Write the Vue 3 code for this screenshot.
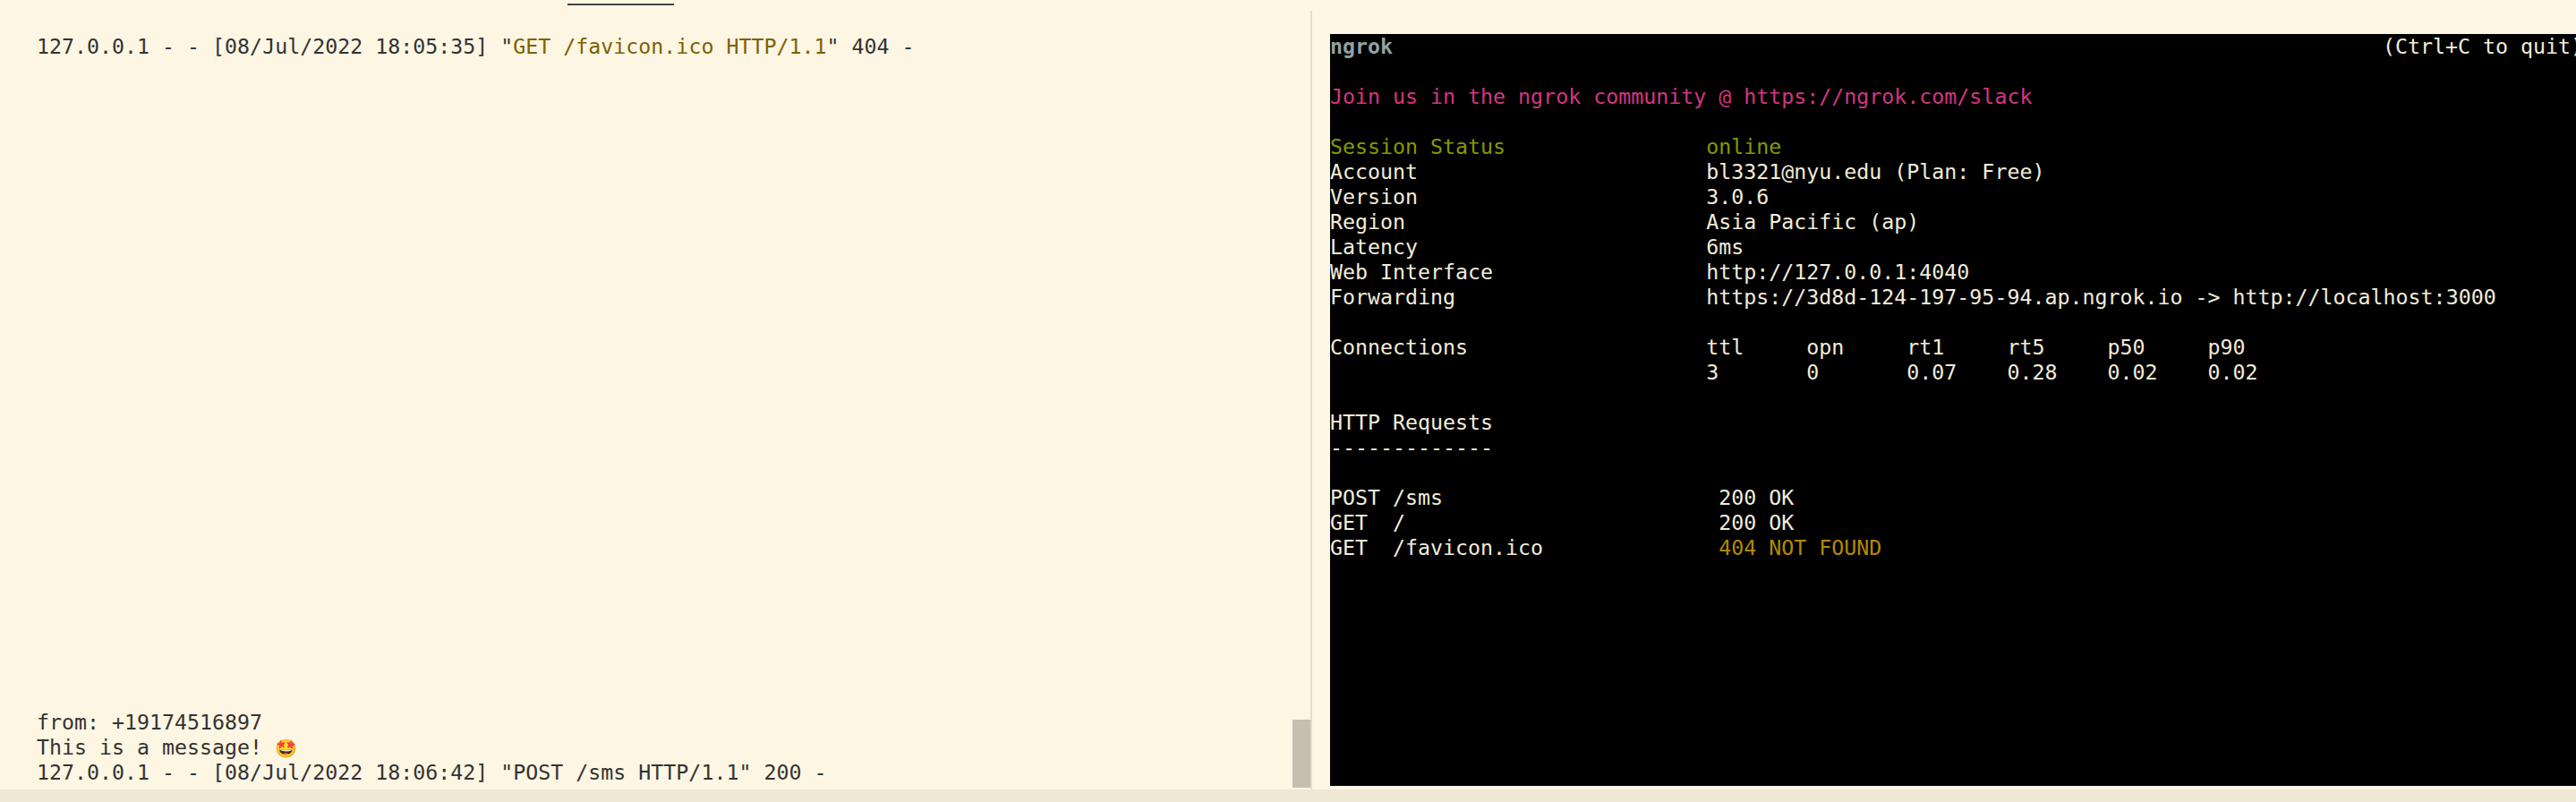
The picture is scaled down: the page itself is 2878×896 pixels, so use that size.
<script setup>
const info = [
  ['Account', 'bl3321@nyu.edu (Plan: Free)'],
  ['Version', '3.0.6'],
  ['Region', 'Asia Pacific (ap)'],
  ['Latency', '6ms'],
  ['Web Interface', 'http://127.0.0.1:4040'],
  ['Forwarding', 'https://3d8d-124-197-95-94.ap.ngrok.io -> http://localhost:3000'],
]
const rows = [
  ...info.map((r) => r[0].padEnd(30) + r[1]),
  '',
  'Connections'.padEnd(30) + 'ttl     opn     rt1     rt5     p50     p90',
  ''.padEnd(30) + '3       0       0.07    0.28    0.02    0.02',
  '',
  'HTTP Requests',
  '-------------',
  '',
  'POST /sms'.padEnd(31) + '200 OK',
  'GET  /'.padEnd(31) + '200 OK',
]
const sessionRow = 'Session Status'.padEnd(30) + 'online'
const lastRow = 'GET  /favicon.ico'.padEnd(31)
</script>

<template>
  <div class="screen">
    <div class="panes">
      <section class="pane left">
        <div class="tab-mark"></div>
        <div class="log top">127.0.0.1 - - [08/Jul/2022 18:05:35] "<span class="gold">GET /favicon.ico HTTP/1.1</span>" 404 -</div>
        <div class="log bottom">
          <div>from: +19174516897</div>
          <div class="msg">This is a message! <span class="emoji">🤩</span></div>
          <div>127.0.0.1 - - [08/Jul/2022 18:06:42] "POST /sms HTTP/1.1" 200 -</div>
        </div>
        <div class="thumb"></div>
      </section>
      <section class="pane right">
        <div class="term">
          <div class="head"><b class="brand">ngrok</b><span class="quit">(Ctrl+C to quit)</span></div>
          <div class="line"></div>
          <div class="line pink">Join us in the ngrok community @ https://ngrok.com/slack</div>
          <div class="line"></div>
          <div class="line lime">{{ sessionRow }}</div>
          <div v-for="(row, i) in rows" :key="i" class="line">{{ row }}</div>
          <div class="line">{{ lastRow }}<span class="amber">404 NOT FOUND</span></div>
        </div>
      </section>
    </div>
    <footer class="status"></footer>
  </div>
</template>

<style>
html, body { margin: 0; background: #fdf6e3; overflow: hidden; }
</style>

<style scoped>
.screen { width: 2878px; height: 896px; display: flex; flex-direction: column; background: #fdf6e3; font-family: "DejaVu Sans Mono", monospace; font-size: 23.27px; line-height: 28px; color: #333; overflow: hidden; }
.panes { flex: 1; display: flex; min-height: 0; }
.pane { position: relative; box-sizing: border-box; }
.left { width: 1466px; border-right: 2px solid #e3decb; margin-top: 12px; height: 870px; flex: none; }
.tab-mark { position: absolute; left: 634px; top: -8px; width: 119px; height: 2px; background: #444; }
.log { position: absolute; left: 41px; white-space: pre; }
.top { top: 26px; }
.bottom { top: 781px; }
.msg { height: 28px; }
.gold { color: #7f6000; }
.emoji { font-family: "Noto Color Emoji", "DejaVu Sans", sans-serif; font-size: 20px; line-height: 1; }
.thumb { position: absolute; right: 0; top: 792px; width: 20px; height: 76px; background: #c4bfb0; }
.right { flex: 1; padding: 38px 0 0 20px; min-width: 0; }
.term { height: 840px; background: #000; color: #f2ecd9; white-space: pre; overflow: hidden; }
.head { display: flex; height: 28px; white-space: pre; }
.brand { color: #93a1a1; width: 1176px; flex: none; }
.quit { flex: none; }
.line { height: 28px; }
.pink { color: #d33682; }
.lime { color: #859900; }
.amber { color: #b58900; }
.status { height: 14px; background: #eee8d5; flex: none; }
</style>
